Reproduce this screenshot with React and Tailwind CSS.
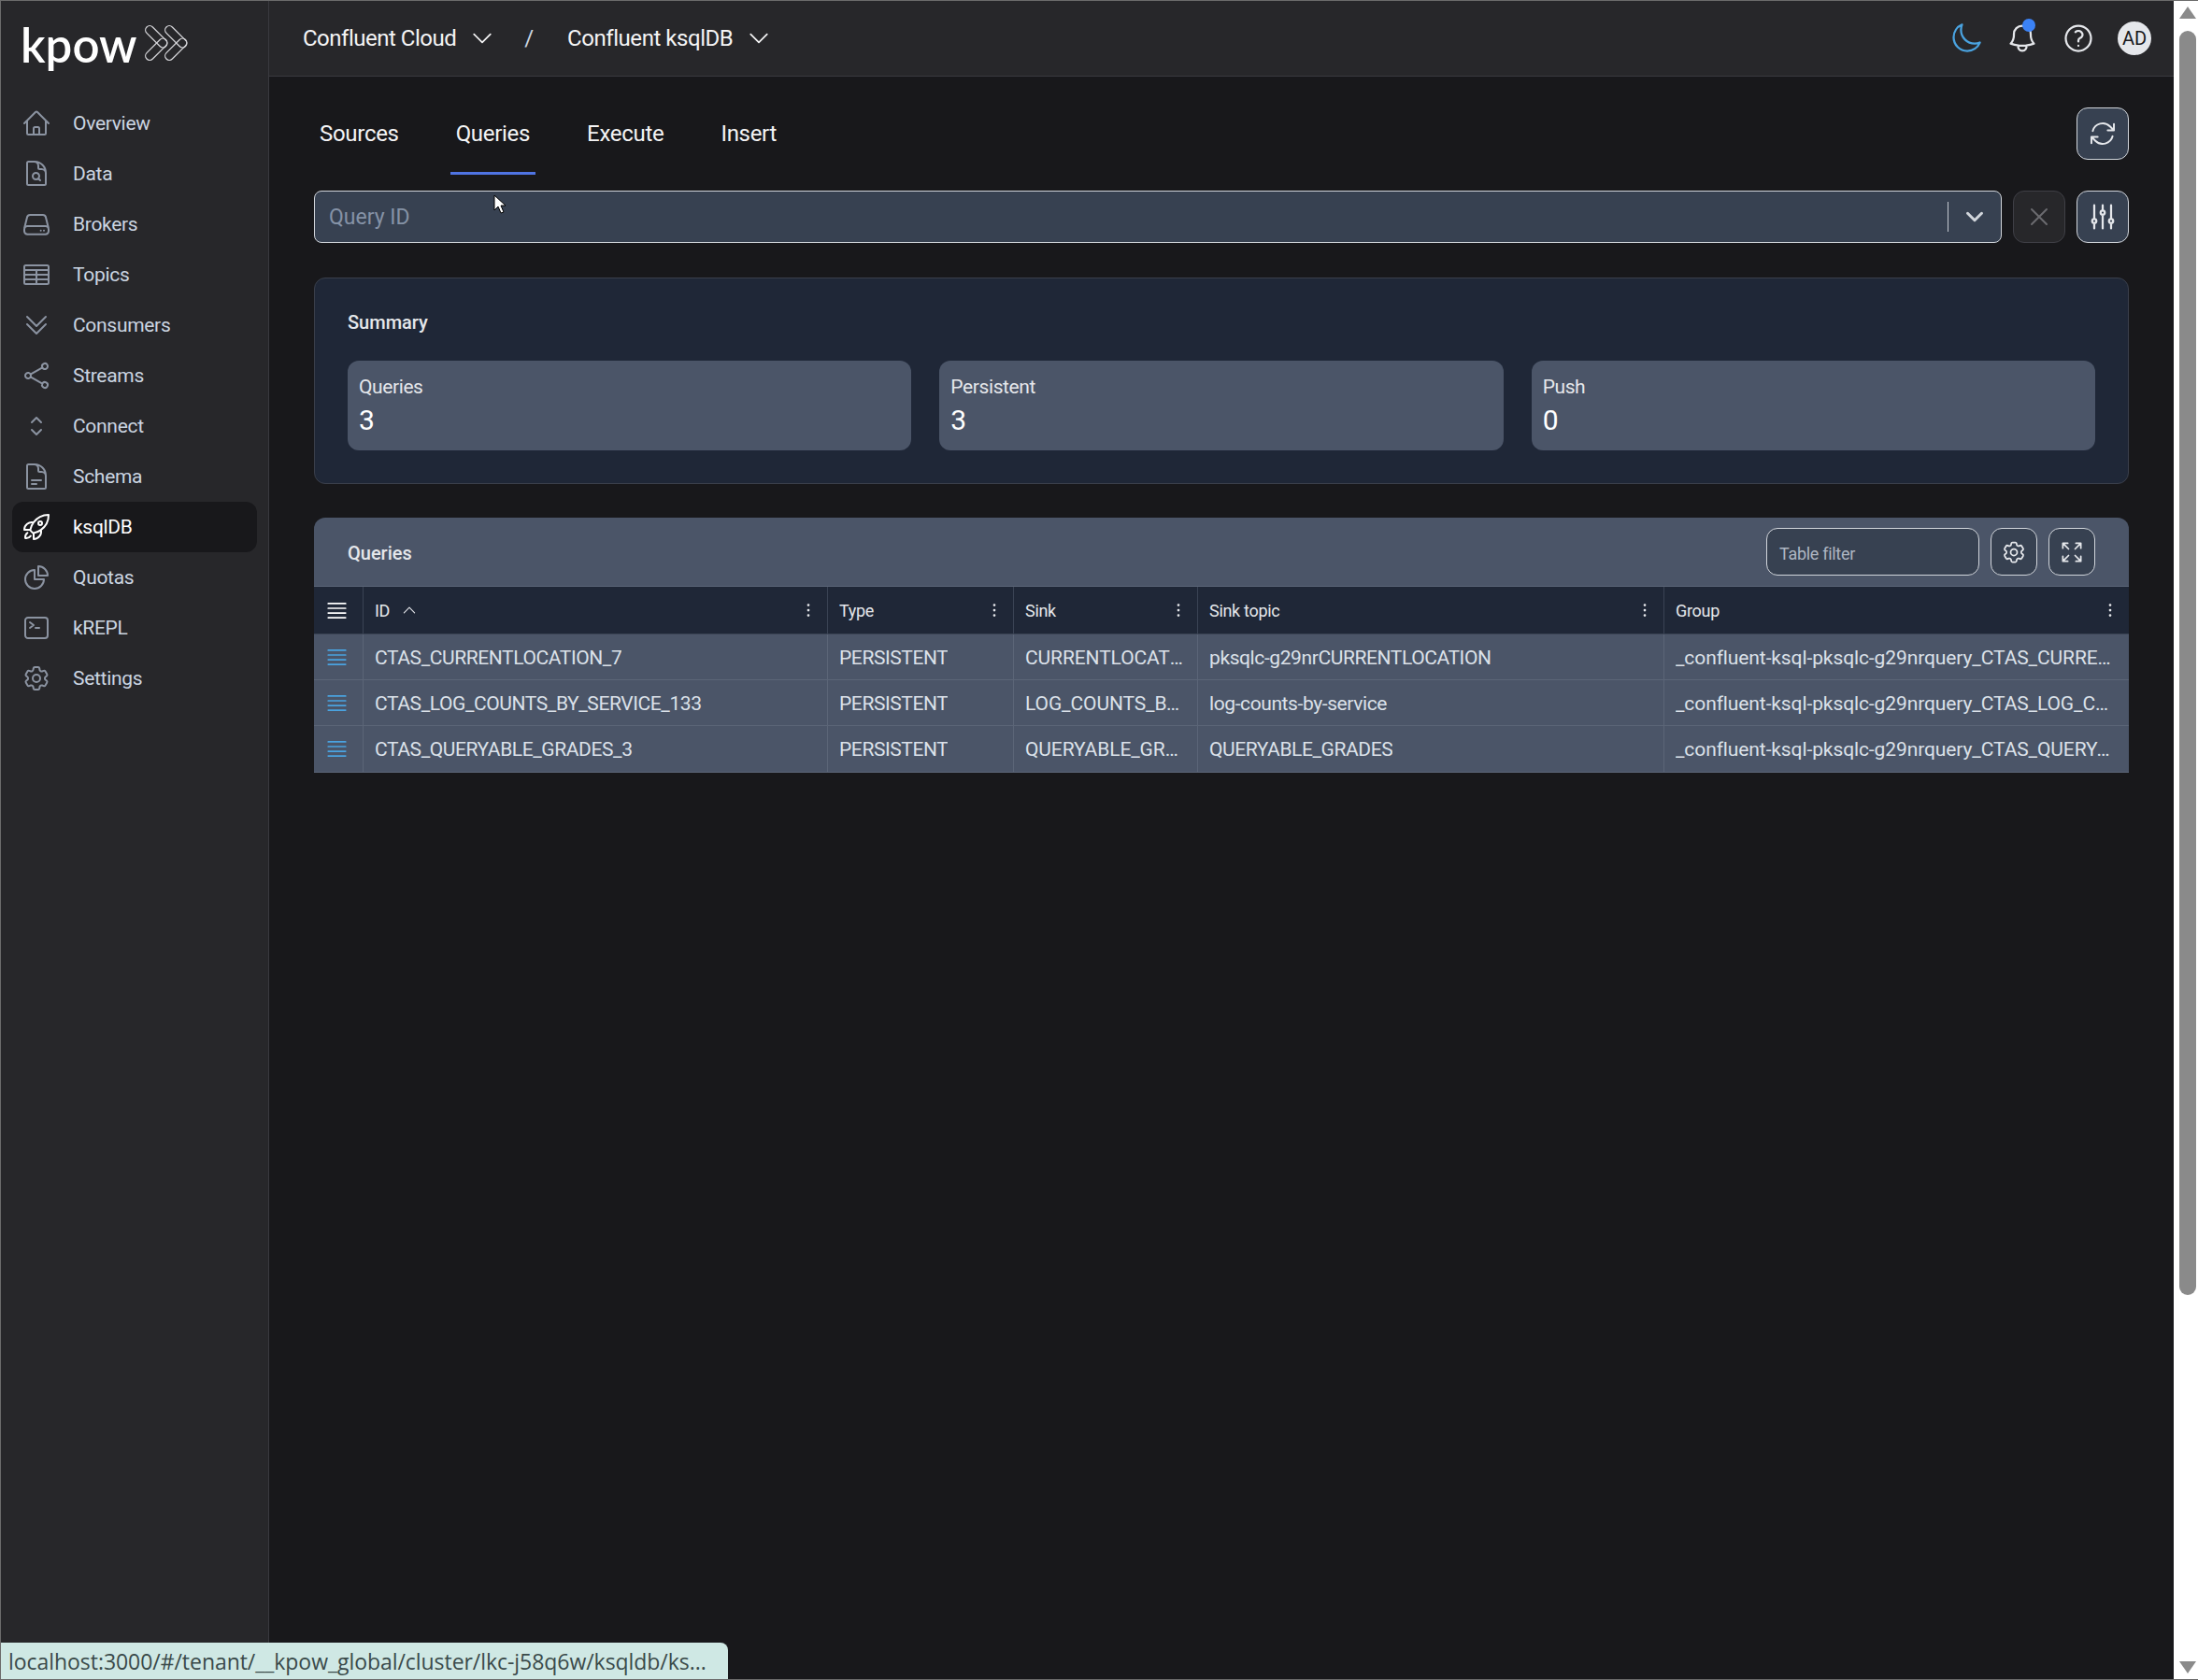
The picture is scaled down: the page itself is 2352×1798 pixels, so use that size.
import React from "react";
import {
  HiOutlineHome,
  HiOutlineDocumentMagnifyingGlass,
  HiOutlineTableCells,
  HiOutlineChevronDoubleDown,
  HiOutlineShare,
  HiOutlineChevronUpDown,
  HiOutlineDocumentText,
  HiOutlineRocketLaunch,
  HiOutlineChartPie,
  HiOutlineCommandLine,
  HiOutlineCog6Tooth,
  HiOutlineMoon,
  HiOutlineBell,
  HiOutlineQuestionMarkCircle,
  HiOutlineChevronDown,
  HiOutlineChevronUp,
  HiOutlineArrowPath,
  HiOutlineXMark,
  HiOutlineAdjustmentsVertical,
  HiOutlineBars4,
  HiOutlineArrowsPointingOut,
  HiOutlineEllipsisVertical,
} from "react-icons/hi2";

function DriveIcon({ className }) {
  return (
    <svg viewBox="0 0 24 24" fill="none" stroke="currentColor" strokeWidth="1.5" strokeLinecap="round" strokeLinejoin="round" className={className}>
      <path d="M2.5 14.5l2-8.2A2.5 2.5 0 0 1 7 4.5h10a2.5 2.5 0 0 1 2.5 1.8l2 8.2" />
      <rect x="2.25" y="13.5" width="19.5" height="6.5" rx="2.5" />
      <path d="M15.5 17h.01M18 17h.01" />
    </svg>
  );
}

function LogoMark() {
  const capsules = [
    [12.25, 12.25, 45],
    [12.25, 25.75, -45],
    [33.25, 12.25, 45],
    [33.25, 25.75, -45],
  ];
  return (
    <svg viewBox="0 0 46 38" className="h-[38px] w-[46px]" fill="none" stroke="#d4d4d8" strokeWidth="1.3">
      {capsules.map((c, i) => (
        <rect key={i} x="-14.5" y="-4.5" width="29" height="9" rx="4.5" transform={`translate(${c[0]} ${c[1]}) rotate(${c[2]})`} />
      ))}
    </svg>
  );
}

const navItems = [
  { label: "Overview", icon: HiOutlineHome },
  { label: "Data", icon: HiOutlineDocumentMagnifyingGlass },
  { label: "Brokers", icon: DriveIcon },
  { label: "Topics", icon: HiOutlineTableCells },
  { label: "Consumers", icon: HiOutlineChevronDoubleDown },
  { label: "Streams", icon: HiOutlineShare },
  { label: "Connect", icon: HiOutlineChevronUpDown },
  { label: "Schema", icon: HiOutlineDocumentText },
  { label: "ksqlDB", icon: HiOutlineRocketLaunch, active: true },
  { label: "Quotas", icon: HiOutlineChartPie },
  { label: "kREPL", icon: HiOutlineCommandLine },
  { label: "Settings", icon: HiOutlineCog6Tooth },
];

const columns = ["ID", "Type", "Sink", "Sink topic", "Group"];

const rows = [
  ["CTAS_CURRENTLOCATION_7", "PERSISTENT", "CURRENTLOCATION", "pksqlc-g29nrCURRENTLOCATION", "_confluent-ksql-pksqlc-g29nrquery_CTAS_CURRENTLOCATION_7"],
  ["CTAS_LOG_COUNTS_BY_SERVICE_133", "PERSISTENT", "LOG_COUNTS_BY_SERVICE", "log-counts-by-service", "_confluent-ksql-pksqlc-g29nrquery_CTAS_LOG_COUNTS_BY_SERVICE_133"],
  ["CTAS_QUERYABLE_GRADES_3", "PERSISTENT", "QUERYABLE_GRADES", "QUERYABLE_GRADES", "_confluent-ksql-pksqlc-g29nrquery_CTAS_QUERYABLE_GRADES_3"],
];

const stats = [
  ["Queries", "3"],
  ["Persistent", "3"],
  ["Push", "0"],
];

const tabs = ["Sources", "Queries", "Execute", "Insert"];

const rowGrid = "grid grid-cols-[53px_497px_199px_197px_499px_497px]";

function SquareButton({ children }) {
  return (
    <button className="flex h-14 w-14 items-center justify-center rounded-xl border border-[#d1d5db] bg-[#374151] text-[#e5e7eb]">
      {children}
    </button>
  );
}

function Sidebar() {
  return (
    <aside className="flex w-[287px] shrink-0 flex-col border-r border-[#3a3a3f] bg-[#27272a]">
      <div className="flex h-[104px] items-start pl-[21px] pt-[17px]">
        <span className="font-['Lato',sans-serif] text-[51px] leading-[60px] font-semibold text-white">kpow</span>
        <span className="ml-[8px] mt-[9px]">
          <LogoMark />
        </span>
      </div>
      <nav className="flex flex-col px-3">
        {navItems.map((item) => {
          const Icon = item.icon;
          return (
            <a
              key={item.label}
              className={
                item.active
                  ? "flex h-[54px] items-center gap-[23px] rounded-xl bg-[#18181b] pl-[10px] text-white"
                  : "flex h-[54px] items-center gap-[23px] rounded-xl pl-[10px] text-[#cbd5e1]"
              }
            >
              <Icon className={item.active ? "h-8 w-8 text-white" : "h-8 w-8 text-[#8b93a1]"} />
              <span className="pt-[2px] text-[21px] tracking-[-0.3px]">{item.label}</span>
            </a>
          );
        })}
      </nav>
    </aside>
  );
}

function Topbar() {
  return (
    <header className="flex h-[81px] shrink-0 items-center border-b border-[#3a3a3f] bg-[#27272a] pl-9 pr-6 text-white">
      <span className="text-[24px] tracking-[-0.5px] text-[#f4f4f5]">Confluent Cloud</span>
      <HiOutlineChevronDown className="ml-[14px] h-7 w-7 text-[#f4f4f5]" />
      <span className="ml-[31px] text-[24px] text-[#cbd5e1]">/</span>
      <span className="ml-[36px] text-[24px] tracking-[-0.45px] text-[#f4f4f5]">Confluent ksqlDB</span>
      <HiOutlineChevronDown className="ml-[14px] h-7 w-7 text-[#f4f4f5]" />
      <div className="ml-auto flex items-center">
        <HiOutlineMoon className="h-9 w-9 text-[#4aa3e0]" />
        <div className="relative ml-6 h-9 w-9">
          <HiOutlineBell className="h-9 w-9 text-[#e5e7eb]" />
          <span className="absolute right-[4px] top-[-3px] h-[14px] w-[14px] rounded-full bg-[#3b82f6]" />
        </div>
        <HiOutlineQuestionMarkCircle className="ml-[24px] h-9 w-9 text-[#e5e7eb]" />
        <span className="ml-[24px] flex h-9 w-9 items-center justify-center rounded-full bg-[#e5e7eb] text-[20px] text-[#18181b]">AD</span>
      </div>
    </header>
  );
}

function Tabs() {
  return (
    <div className="flex h-[72px] items-start justify-between">
      <div className="flex h-full">
        {tabs.map((t) => (
          <div
            key={t}
            className={
              t === "Queries"
                ? "mr-[49px] flex h-full items-start border-b-[3px] border-[#4f74e3] px-[6px] pt-[10px]"
                : "mr-[49px] flex h-full items-start px-[6px] pt-[10px]"
            }
          >
            <span className="text-[24px] leading-9 tracking-[-0.3px] text-[#f4f4f5]">{t}</span>
          </div>
        ))}
      </div>
      <SquareButton>
        <HiOutlineArrowPath className="h-8 w-8" />
      </SquareButton>
    </div>
  );
}

function QueryFilter() {
  return (
    <div className="mt-[17px] flex gap-3">
      <div className="flex h-14 flex-1 items-center rounded-lg border border-[#d1d5db] bg-[#374151] pl-[15px]">
        <span className="flex-1 pt-[2px] text-[23px] text-[#8592a6]">Query ID</span>
        <span className="h-8 w-px bg-[#c4c8cf]" />
        <HiOutlineChevronDown className="mx-4 h-6 w-6 text-[#d1d5db]" strokeWidth={3} />
      </div>
      <button className="flex h-14 w-14 items-center justify-center rounded-xl border border-[#3f3f46] bg-[#27272a] text-[#6b6b6f]">
        <HiOutlineXMark className="h-8 w-8" />
      </button>
      <SquareButton>
        <HiOutlineAdjustmentsVertical className="h-9 w-9" />
      </SquareButton>
    </div>
  );
}

function Summary() {
  return (
    <section className="mt-[37px] h-[221px] rounded-xl border border-[#3a3f4b] bg-[#1f2737] px-[35px] pt-[33px]">
      <h2 className="text-[20px] leading-7 font-medium text-[#e5e7eb]">Summary</h2>
      <div className="mt-[27px] grid grid-cols-3 gap-[30px]">
        {stats.map(([label, value]) => (
          <div key={label} className="h-[96px] rounded-xl bg-[#4b5568] px-3 pt-[13px]">
            <p className="text-[21px] leading-[30px] tracking-[-0.4px] text-[#e5e7eb]">{label}</p>
            <p className="mt-[3px] text-[30px] leading-[36px] text-white">{value}</p>
          </div>
        ))}
      </div>
    </section>
  );
}

function QueriesTable() {
  return (
    <section className="mt-9 overflow-hidden rounded-t-xl">
      <div className="flex h-[74px] items-center border-b border-[#5b6577] bg-[#4b5568] pl-9 pr-9">
        <h2 className="pt-[3px] text-[20px] font-medium text-[#e5e7eb]">Queries</h2>
        <div className="ml-auto flex items-center gap-3">
          <div className="flex h-[51px] w-[228px] items-center rounded-xl border border-[#d1d5db] bg-[#374151] pl-[13px] pt-[3px] text-[18px] tracking-[-0.3px] text-[#aeb6c2]">
            Table filter
          </div>
          <button className="flex h-[51px] w-[50px] items-center justify-center rounded-xl border border-[#d1d5db] bg-[#374151] text-[#e5e7eb]">
            <HiOutlineCog6Tooth className="h-7 w-7" />
          </button>
          <button className="flex h-[51px] w-[50px] items-center justify-center rounded-xl border border-[#d1d5db] bg-[#374151] text-[#e5e7eb]">
            <HiOutlineArrowsPointingOut className="h-7 w-7" />
          </button>
        </div>
      </div>
      <div className={rowGrid + " h-[51px] border-b border-[#3a4354] bg-[#1f2737] text-[18px] text-[#e5e7eb]"}>
        <div className="flex items-center justify-center border-r border-[#3a4354] pr-1">
          <HiOutlineBars4 className="h-[27px] w-[27px] text-white" />
        </div>
        {columns.map((c) => (
          <div key={c} className="flex items-center border-r border-[#3a4354] pl-3 pr-[9px] last:border-r-0">
            <span className="tracking-[-0.3px]">{c}</span>
            {c === "ID" && <HiOutlineChevronUp className="ml-3 h-[18px] w-[18px]" />}
            <HiOutlineEllipsisVertical className="ml-auto h-[22px] w-[22px]" />
          </div>
        ))}
      </div>
      {rows.map((row) => (
        <div key={row[0]} className={rowGrid + " h-[49px] border-b border-[#5b6577] bg-[#4b5568] text-[21px] text-[#dbe1e9] last:h-[50px]"}>
          <div className="flex items-center justify-center border-r border-[#5b6577] pr-1">
            <HiOutlineBars4 className="h-[27px] w-[27px] text-[#4aa3e0]" />
          </div>
          {row.map((cell, i) => (
            <div key={i} className="flex min-w-0 items-center border-r border-[#5b6577] px-3 pt-[3px] last:border-r-0">
              <span className={i === 2 || i === 4 ? "truncate tracking-[-0.1px]" : "truncate tracking-[-0.4px]"}>{cell}</span>
            </div>
          ))}
        </div>
      ))}
    </section>
  );
}

function Scrollbar() {
  return (
    <div className="flex w-[26px] shrink-0 flex-col items-center bg-white pl-[4px]">
      <span className="mt-[6px] h-0 w-0 border-x-[9px] border-b-[13px] border-x-transparent border-b-[#8a8a8a]" />
      <span className="mt-[13px] h-[1353px] w-[18px] rounded-full bg-[#8a8a8a]" />
      <span className="mt-auto mb-[6px] h-0 w-0 border-x-[9px] border-t-[13px] border-x-transparent border-t-[#8a8a8a]" />
    </div>
  );
}

export default function App() {
  return (
    <div className="relative flex h-[1798px] w-[2352px] overflow-hidden border-y border-l border-[#6b6b6b] bg-[#18181b] font-['Roboto',sans-serif]">
      <Sidebar />
      <div className="flex min-w-0 flex-1 flex-col">
        <Topbar />
        <main className="flex-1 pl-[48px] pr-[48px] pt-[33px]">
          <Tabs />
          <QueryFilter />
          <Summary />
          <QueriesTable />
        </main>
      </div>
      <Scrollbar />

      {/* status bubble and pointer sit over the page */}
      <div className="absolute bottom-0 left-0 flex h-[39px] w-[778px] items-center rounded-tr-lg bg-[#cfe8e4] pl-[8px] pt-[2px] font-['Open_Sans',sans-serif] text-[23px] tracking-[-0.05px] text-[#3a4a4a]">
        localhost:3000/#/tenant/__kpow_global/cluster/lkc-j58q6w/ksqldb/ks...
      </div>
      <svg viewBox="0 0 14 22" className="absolute left-[527px] top-[207px] h-[22px] w-[14px]">
        <path d="M1 1v16l4-4 3 7 3-1-3-7h5z" fill="#fff" stroke="#000" strokeWidth="1" />
      </svg>
    </div>
  );
}
